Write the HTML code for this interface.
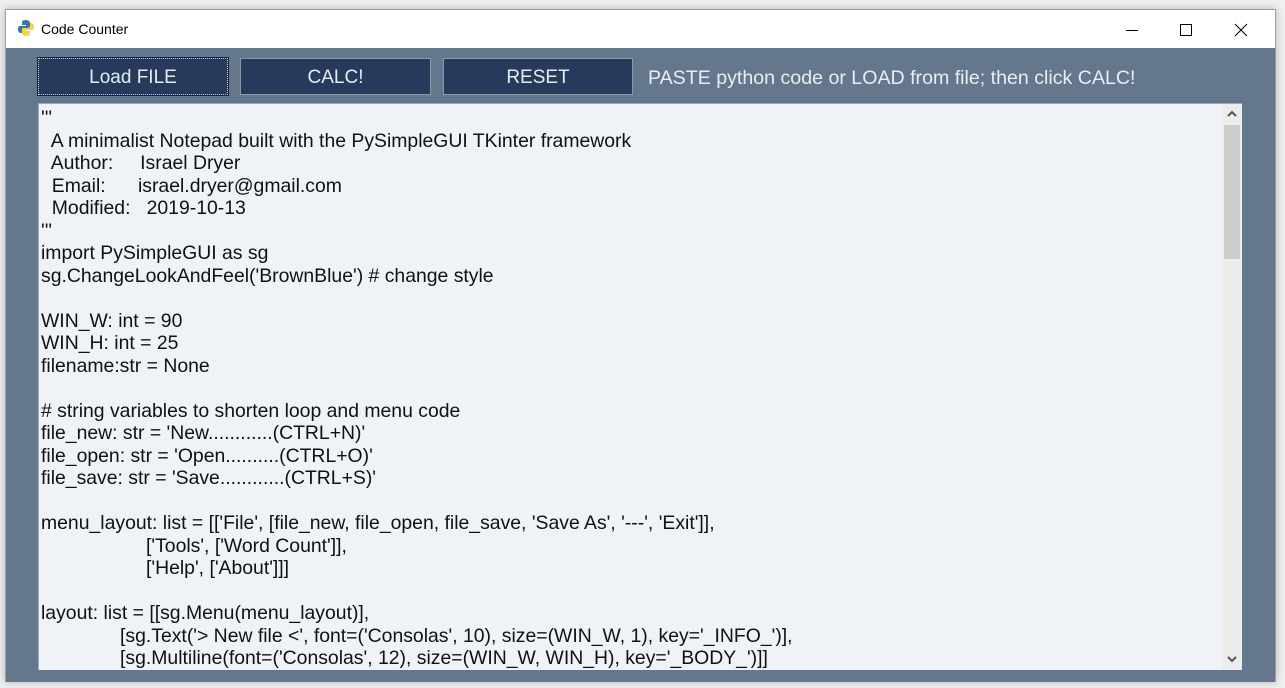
<!DOCTYPE html>
<html><head><style>
body{margin:0;width:1285px;height:688px;background:#f0f0f0;position:relative;overflow:hidden;font-family:"Liberation Sans",Arial,sans-serif}
#win{position:absolute;left:5px;top:9px;width:1269px;height:672px;background:#64778d;border:1px solid #5fb8cc;border-bottom:none;box-shadow:0 0 8px rgba(0,0,0,.25)}
#title{position:absolute;left:0;top:0;width:1269px;height:38px;background:#fff}
#title .t{position:absolute;left:35px;top:11px;font-size:14px;color:#000}
.btn{position:absolute;top:48px;height:37px;background:#283a5b;border:1px solid #8a98aa;box-sizing:border-box;color:#e4ecf4;font-size:19px;text-align:center;line-height:37px}
#info{position:absolute;left:642px;top:57px;font-size:19.6px;color:#e8eef4}
#ta{position:absolute;left:32px;top:93px;width:1204px;height:567px;background:#eff2f7;border-top:1px solid #a0a8b4;border-left:1px solid #a0a8b4;box-sizing:border-box;overflow:hidden}
#ta .l{position:absolute;left:2px;font-size:19.4px;color:#111;white-space:pre;line-height:22px}
#sb{position:absolute;right:0;top:0;width:20px;height:100%;background:#ececec}
#thumb{position:absolute;left:2px;top:21px;width:16px;height:134px;background:#cdcdcd}
</style></head><body>
<div id="win">
<div id="title">
<svg style="position:absolute;left:11px;top:9px" width="18" height="18" viewBox="0 0 18 18"><path d="M9 1C5 1 5 2.5 5 4v2h4v1H3C1 7 1 9 1 10.5S2 14 3.5 14H5v-2.5C5 10 6 9 7.5 9h4C13 9 13 8 13 7V4C13 2 11 1 9 1z" fill="#3b76a9"/><path d="M9 17c4 0 4-1.5 4-3v-2H9v-1h6c2 0 2-2 2-3.5S16 4 14.5 4H13v2.5C13 8 12 9 10.5 9h-4C5 9 5 10 5 11v3c0 2 2 3 4 3z" fill="#f6d245"/></svg>
<span class="t">Code Counter</span>
<svg style="position:absolute;left:1120px;top:12px" width="140" height="16"><path d="M0 8.5h12" stroke="#000"/><rect x="54.5" y="2.5" width="11" height="11" fill="none" stroke="#000"/><path d="M109 2l12 12M121 2l-12 12" stroke="#000"/></svg>
</div>
<div class="btn" style="left:32px;width:190px;border:1px dotted #c8d0d8;outline:1px solid #1a2235">Load FILE</div>
<div class="btn" style="left:234px;width:191px">CALC!</div>
<div class="btn" style="left:437px;width:190px">RESET</div>
<div id="info">PASTE python code or LOAD from file; then click CALC!</div>
<div id="ta">
<div class="l" style="top:3px">'''</div>
<div class="l" style="top:26px">  A minimalist Notepad built with the PySimpleGUI TKinter framework</div>
<div class="l" style="top:48px">  Author:     Israel Dryer</div>
<div class="l" style="top:71px">  Email:      israel.dryer@gmail.com</div>
<div class="l" style="top:93px">  Modified:   2019-10-13</div>
<div class="l" style="top:116px">'''</div>
<div class="l" style="top:138px">import PySimpleGUI as sg</div>
<div class="l" style="top:161px">sg.ChangeLookAndFeel('BrownBlue') # change style</div>
<div class="l" style="top:206px">WIN_W: int = 90</div>
<div class="l" style="top:228px">WIN_H: int = 25</div>
<div class="l" style="top:251px">filename:str = None</div>
<div class="l" style="top:296px"># string variables to shorten loop and menu code</div>
<div class="l" style="top:318px">file_new: str = 'New............(CTRL+N)'</div>
<div class="l" style="top:341px">file_open: str = 'Open..........(CTRL+O)'</div>
<div class="l" style="top:363px">file_save: str = 'Save............(CTRL+S)'</div>
<div class="l" style="top:408px">menu_layout: list = [['File', [file_new, file_open, file_save, 'Save As', '---', 'Exit']],</div>
<div class="l" style="top:431px;left:107px">['Tools', ['Word Count']],</div>
<div class="l" style="top:453px;left:107px">['Help', ['About']]]</div>
<div class="l" style="top:498px">layout: list = [[sg.Menu(menu_layout)],</div>
<div class="l" style="top:521px;left:81px">[sg.Text('&gt; New file &lt;', font=('Consolas', 10), size=(WIN_W, 1), key='_INFO_')],</div>
<div class="l" style="top:543px;left:81px">[sg.Multiline(font=('Consolas', 12), size=(WIN_W, WIN_H), key='_BODY_')]]</div>
<div id="sb"><div id="thumb"></div>
<svg style="position:absolute;left:5px;top:6px" width="10" height="8"><path d="M1 6l4-4 4 4" stroke="#555" stroke-width="2" fill="none"/></svg>
<svg style="position:absolute;left:5px;top:551px" width="10" height="8"><path d="M1 2l4 4 4-4" stroke="#555" stroke-width="2" fill="none"/></svg>
</div>
</div>
</div>
</body></html>
